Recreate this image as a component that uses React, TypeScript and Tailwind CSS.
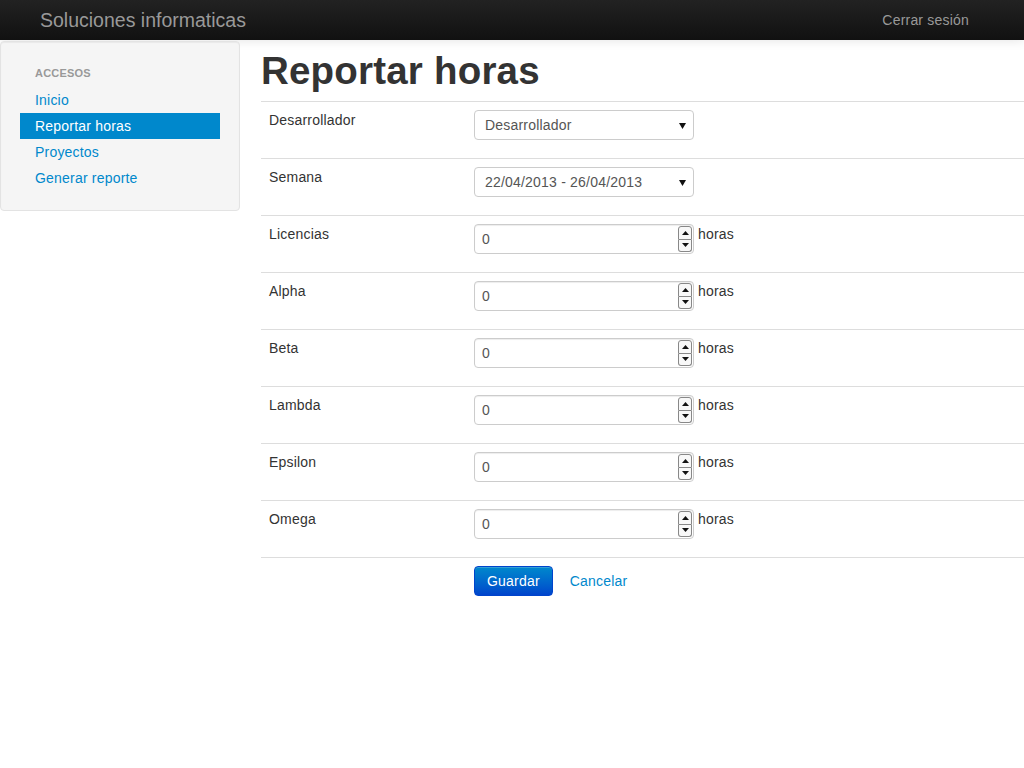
import React from 'react'

const navItems = [
  { label: 'Inicio', active: false },
  { label: 'Reportar horas', active: true },
  { label: 'Proyectos', active: false },
  { label: 'Generar reporte', active: false },
]

const hourRows = ['Licencias', 'Alpha', 'Beta', 'Lambda', 'Epsilon', 'Omega']

function Triangle({ up }: { up?: boolean }) {
  return (
    <svg width="7" height="4" viewBox="0 0 7 4" className="block">
      <polygon points={up ? '0,4 7,4 3.5,0' : '0,0 7,0 3.5,4'} fill="#111" />
    </svg>
  )
}

function SelectBox({ value }: { value: string }) {
  return (
    <div className="relative w-[220px] h-[30px] rounded-[4px] border border-[#ccc] bg-white flex items-center pl-[10px] text-[14px] text-[#555]">
      <span>{value}</span>
      <svg width="7" height="6" viewBox="0 0 7 6" className="absolute right-[7px] top-[12px]">
        <polygon points="0,0 7,0 3.5,6" fill="#111" />
      </svg>
    </div>
  )
}

function NumberBox() {
  return (
    <div className="flex items-start gap-[4px]">
      <div className="relative w-[220px] h-[30px] rounded-[4px] border border-[#ccc] bg-white shadow-[inset_0_1px_1px_rgba(0,0,0,0.075)] flex items-center pl-[7px] text-[14px] text-[#555]">
        <span>0</span>
        <div className="absolute right-[1px] top-px bottom-px w-[14px] flex flex-col">
          <div className="flex-1 border border-[#888] rounded-t-[3px] bg-[#f8f8f8] flex items-center justify-center">
            <Triangle up />
          </div>
          <div className="flex-1 border border-t-0 border-[#888] rounded-b-[3px] bg-[#f8f8f8] flex items-center justify-center">
            <Triangle />
          </div>
        </div>
      </div>
      <span className="leading-5 text-[14px] text-[#333]">horas</span>
    </div>
  )
}

function FormRow({ label, children }: { label?: string; children: React.ReactNode }) {
  return (
    <div className="grid grid-cols-[205px_1fr] border-t border-[#ddd]">
      <div className="p-2 leading-5">{label}</div>
      <div className="p-2">{children}</div>
    </div>
  )
}

export default function App() {
  return (
    <div className="min-h-[768px] bg-white text-[14px] leading-5 tracking-[0.2px] text-[#333] font-['Liberation_Sans',Arial,sans-serif]">
      <header className="h-10 bg-gradient-to-b from-[#222] to-[#111] shadow-[0_1px_10px_rgba(0,0,0,0.1)] flex items-center justify-between pl-10 pr-[55px]">
        <span className="text-[19.5px] tracking-normal text-[#999]">Soluciones informaticas</span>
        <span className="text-[14px] text-[#999]">Cerrar sesión</span>
      </header>

      <div className="flex gap-[21px]">
        <aside className="w-[240px] shrink-0 mt-px self-start bg-[#f5f5f5] border border-[#e3e3e3] rounded-[4px] shadow-[inset_0_1px_1px_rgba(0,0,0,0.05)] pt-[18px] pb-[19px] px-[19px]">
          <div className="px-[15px] py-[3px] text-[11px] font-bold uppercase text-[#999] leading-5">Accesos</div>
          <ul className="mt-px">
            {navItems.map((item) => (
              <li
                key={item.label}
                className={
                  item.active
                    ? 'px-[15px] py-[3px] bg-[#0088cc] text-white'
                    : 'px-[15px] py-[3px] text-[#0088cc]'
                }
              >
                {item.label}
              </li>
            ))}
          </ul>
        </aside>

        <main className="flex-1">
          <h1 className="mt-[11px] mb-[10px] text-[38.5px] leading-10 font-bold text-[#333]">Reportar horas</h1>
          <div>
            <FormRow label="Desarrollador">
              <div className="mb-[10px]">
                <SelectBox value="Desarrollador" />
              </div>
            </FormRow>
            <FormRow label="Semana">
              <div className="mb-[10px]">
                <SelectBox value="22/04/2013 - 26/04/2013" />
              </div>
            </FormRow>
            {hourRows.map((row) => (
              <FormRow key={row} label={row}>
                <div className="mb-[10px]">
                  <NumberBox />
                </div>
              </FormRow>
            ))}
            <FormRow>
              <div className="flex items-center gap-[17px]">
                <button className="h-[30px] px-[12px] rounded-[4px] border border-[#0044cc] bg-gradient-to-b from-[#0088cc] to-[#0044cc] text-white text-[14px] shadow-[inset_0_1px_0_rgba(255,255,255,0.2)]">
                  Guardar
                </button>
                <span className="text-[#0088cc]">Cancelar</span>
              </div>
            </FormRow>
          </div>
        </main>
      </div>
    </div>
  )
}
